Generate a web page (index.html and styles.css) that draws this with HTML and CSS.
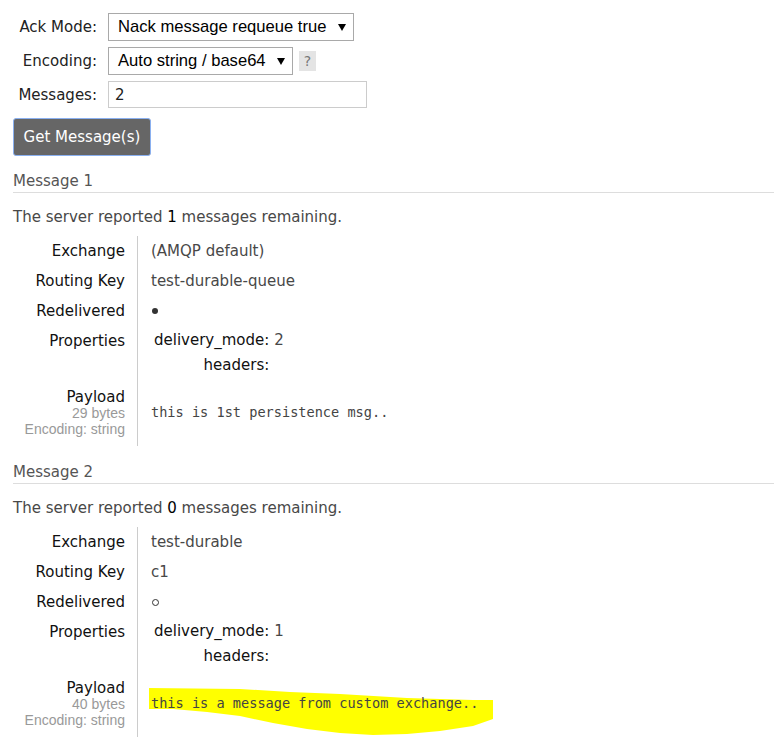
FILE: index.html
```html
<!DOCTYPE html>
<html>
<head>
<meta charset="utf-8">
<link rel="stylesheet" href="styles.css">
</head>
<body>
<div class="page">
  <div class="form">
    <label class="flabel">Ack Mode:</label>
    <div class="fctl"><span class="sel sel-ack">Nack message requeue true</span></div>
    <label class="flabel">Encoding:</label>
    <div class="fctl"><span class="sel sel-enc">Auto string / base64</span><span class="help">?</span></div>
    <label class="flabel">Messages:</label>
    <div class="fctl"><span class="inp">2</span></div>
  </div>
  <button class="btn">Get Message(s)</button>

  <h3 class="mhead">Message 1</h3>
  <p class="remain">The server reported <b>1</b> messages remaining.</p>
  <table class="msg">
    <tr><th>Exchange</th><td>(AMQP default)</td></tr>
    <tr><th>Routing Key</th><td>test-durable-queue</td></tr>
    <tr><th>Redelivered</th><td><span class="dot"></span></td></tr>
    <tr><th>Properties</th><td class="props">
      <table class="kv">
        <tr><th>delivery_mode:</th><td>2</td></tr>
        <tr><th>headers:</th><td></td></tr>
      </table>
    </td></tr>
    <tr class="payrow"><th>Payload<span class="sub">29 bytes</span><span class="sub">Encoding: string</span></th><td><span class="pre">this is 1st persistence msg..</span></td></tr>
  </table>

  <h3 class="mhead m2">Message 2</h3>
  <p class="remain">The server reported <b>0</b> messages remaining.</p>
  <table class="msg">
    <tr><th>Exchange</th><td>test-durable</td></tr>
    <tr><th>Routing Key</th><td>c1</td></tr>
    <tr><th>Redelivered</th><td><span class="ring"></span></td></tr>
    <tr><th>Properties</th><td class="props">
      <table class="kv">
        <tr><th>delivery_mode:</th><td>1</td></tr>
        <tr><th>headers:</th><td></td></tr>
      </table>
    </td></tr>
    <tr class="payrow"><th>Payload<span class="sub">40 bytes</span><span class="sub">Encoding: string</span></th><td><span class="pre hl"><svg class="marker" width="345" height="50" viewBox="0 0 345 50"><polygon fill="#ffff00" points="1,2 92,3 142,6 192,8 259,12 325,14 345,14 345,33 325,40 292,45 259,48 225,49 192,47 159,43 125,37 92,30 59,26 25,23 1,23"/></svg><span class="txt">this is a message from custom exchange..</span></span></td></tr>
  </table>
</div>
</body>
</html>
```
FILE: styles.css
```css
html, body { margin: 0; padding: 0; background: #fff; }
body { font-family: "DejaVu Sans", Verdana, sans-serif; font-size: 15px; color: #484848; }
.page { padding: 13px 0 0 13px; }

.form { display: grid; grid-template-columns: 84px auto; column-gap: 11px; row-gap: 6px; align-items: center; justify-items: start; }
.flabel { justify-self: end; color: #222; font-size: 15px; }
.fctl { display: flex; align-items: center; gap: 6px; }
.sel { position: relative; box-sizing: border-box; height: 28px; border: 1px solid #a9a9a9; display: inline-flex; align-items: center; padding-left: 9px; font-family: "Liberation Sans", Arial, sans-serif; font-size: 16.6px; color: #000; background: #fff; }
.sel::after { content: ""; position: absolute; right: 7px; top: 10px; border-left: 4px solid transparent; border-right: 4px solid transparent; border-top: 7px solid #000; }
.sel-ack { width: 246px; }
.sel-enc { width: 185px; }
.help { display: inline-flex; align-items: center; justify-content: center; width: 17px; height: 20px; background: #e4e4e4; color: #777; font-size: 14px; }
.inp { box-sizing: border-box; width: 259px; height: 27px; border: 1px solid #ccc; padding-left: 6px; display: inline-flex; align-items: center; color: #222; font-size: 15px; }

.btn { display: block; margin-top: 10px; box-sizing: border-box; width: 138px; height: 38px; background: #666; color: #fff; border: 1px solid #8ab0f0; border-radius: 3px; font-family: "DejaVu Sans", Verdana, sans-serif; font-size: 15px; padding: 0; }

.mhead { margin: 16px 0 0 0; font-weight: normal; font-size: 15px; color: #555; padding-bottom: 2px; border-bottom: 1px solid #ddd; line-height: 18px; }
.mhead.m2 { margin-top: 17px; }
.remain { margin: 15px 0 0 0; line-height: 18px; }
.remain b { font-weight: normal; color: #000; }

.msg { border-collapse: collapse; margin-top: 10px; }
.msg > tbody > tr > th { width: 112px; text-align: right; font-weight: normal; color: #111; padding: 7px 12px 7px 0; line-height: 16px; vertical-align: top; }
.msg > tbody > tr > td { border-left: 1px solid #ccc; padding: 7px 0 7px 13px; line-height: 16px; height: 16px; vertical-align: top; }
.msg td.props { padding: 2px 0 4px 16px; }
.kv { border-collapse: collapse; }
.kv th { text-align: right; font-weight: normal; color: #111; padding: 0; line-height: 25px; }
.kv td { padding: 0 0 0 5px; line-height: 25px; }
.sub { display: block; font-family: "Liberation Sans", Arial, sans-serif; font-size: 14px; color: #999; line-height: 16px; }
.payrow > th { padding-bottom: 9px !important; }
.payrow > td { vertical-align: middle !important; padding-bottom: 12px !important; }
.pre { font-family: "DejaVu Sans Mono", Consolas, monospace; font-size: 13.6px; color: #444; }
.dot { display: inline-block; width: 6px; height: 6px; border-radius: 50%; background: #333; margin-left: 1px; vertical-align: 2px; }
.ring { display: inline-block; box-sizing: border-box; width: 7px; height: 7px; border-radius: 50%; border: 1px solid #333; margin-left: 1px; vertical-align: 1px; }
.hl { position: relative; display: inline-block; }
.marker { position: absolute; left: -3px; top: -9px; }
.txt { position: relative; }
```
